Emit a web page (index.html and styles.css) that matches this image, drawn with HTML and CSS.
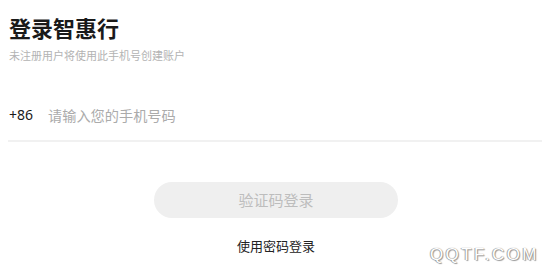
FILE: index.html
```html
<!DOCTYPE html>
<html lang="zh">
<head>
<meta charset="utf-8">
<link rel="stylesheet" href="styles.css">
</head>
<body>
<div class="page">
  <h1 class="title">登录智惠行</h1>
  <p class="subtitle">未注册用户将使用此手机号创建账户</p>
  <div class="phone-row">
    <span class="code">+86</span>
    <span class="placeholder">请输入您的手机号码</span>
  </div>
  <div class="actions">
    <div class="btn">验证码登录</div>
    <div class="alt">使用密码登录</div>
  </div>
  <div class="watermark">QQTF.COM</div>
</div>
</body>
</html>
```
FILE: styles.css
```css
* { box-sizing: border-box; }
html, body { margin: 0; padding: 0; background: #fff; }
body {
  font-family: "Noto Sans CJK SC", "Noto Sans", sans-serif;
  width: 550px;
  height: 268px;
  overflow: hidden;
}
.page {
  position: relative;
  height: 268px;
  padding: 0 8px 0 8px;
}
.title {
  margin: 0;
  padding-top: 12px;
  padding-left: 1px;
  font-size: 22px;
  line-height: 30px;
  font-weight: 700;
  color: #1a1a1a;
}
.subtitle {
  margin: 6px 0 0 1px;
  font-size: 11px;
  line-height: 14px;
  color: #b3b3b3;
}
.phone-row {
  display: flex;
  align-items: center;
  gap: 15px;
  margin-top: 43px;
  padding: 0 0 15px 1px;
  border-bottom: 2px solid #f1f1f1;
  width: 534px;
}
.code {
  font-size: 14px;
  line-height: 20px;
  color: #1a1a1a;
  font-family: "Noto Sans", sans-serif;
}
.placeholder {
  font-size: 14.2px;
  line-height: 20px;
  color: #ababab;
}
.actions {
  display: flex;
  flex-direction: column;
  align-items: center;
  margin-top: 40px;
  width: 534px;
}
.btn {
  width: 244px;
  height: 36px;
  border-radius: 18px;
  background: #efefef;
  color: #bdbdbd;
  font-size: 15px;
  line-height: 36px;
  text-align: center;
  margin-left: 2px;
}
.alt {
  margin-top: 19px;
  font-size: 13px;
  line-height: 18px;
  color: #222;
  margin-left: 2px;
}
.watermark {
  position: absolute;
  left: 430px;
  top: 245px;
  font-family: "Liberation Sans", Arial, sans-serif;
  font-size: 17px;
  line-height: 20px;
  color: #fff;
  letter-spacing: 2.4px;
  text-shadow: 0 0 1px #777, 1px 1px 1px #999, -1px 0 0 #bbb;
}
```
